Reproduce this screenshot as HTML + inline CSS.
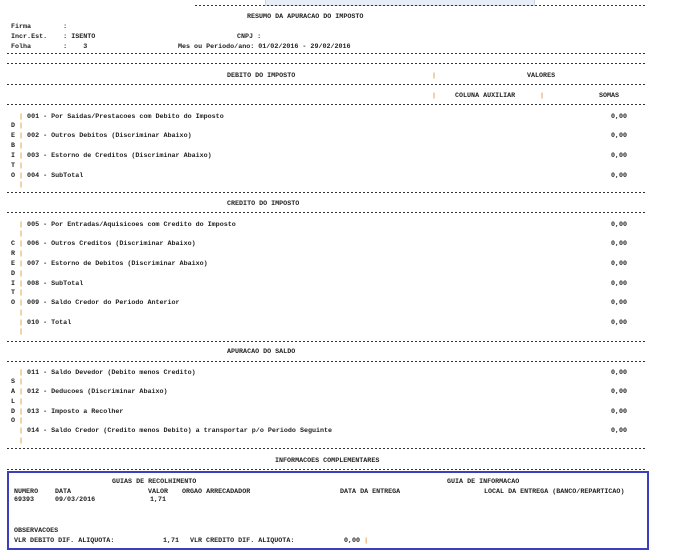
<!DOCTYPE html>
<html><head><meta charset="utf-8"><style>
html,body{margin:0;padding:0;background:#fff;width:681px;height:555px;overflow:hidden;position:relative}
div{position:absolute;white-space:pre;font-family:"Liberation Mono",monospace;font-size:6.7px;line-height:7px;color:#222;font-weight:bold;margin-top:2px}
.l{left:7px;width:638px;height:1px;background:repeating-linear-gradient(90deg,#333 0 2px,transparent 2px 4px);margin-top:0}
.x{margin-top:0}
.b{color:#e09a3a}
.v{left:611px}
</style></head><body>
<div class="x" style="left:265px;top:0;width:268px;height:5px;background:#e8eef7;border:1px solid #c8d4e6;border-top:0"></div>
<div class="l" style="top:5px;left:195px;width:450px"></div>
<div style="left:247px;top:12px">RESUMO DA APURACAO DO IMPOSTO</div>
<div style="left:11px;top:22px">Firma        :</div>
<div style="left:11px;top:32px">Incr.Est.    : ISENTO</div>
<div style="left:237px;top:32px">CNPJ :</div>
<div style="left:11px;top:42px">Folha        :    3</div>
<div style="left:178px;top:42px">Mes ou Periodo/ano: 01/02/2016 - 29/02/2016</div>
<div class="l" style="top:53px"></div>
<div class="l" style="top:63px"></div>
<div style="left:227px;top:71px">DEBITO DO IMPOSTO</div>
<div class="b" style="left:432px;top:71px">|</div>
<div style="left:527px;top:71px">VALORES</div>
<div class="l" style="top:84px"></div>
<div class="b" style="left:432px;top:91px">|</div>
<div style="left:455px;top:91px">COLUNA AUXILIAR</div>
<div class="b" style="left:540px;top:91px">|</div>
<div style="left:599px;top:91px">SOMAS</div>
<div class="l" style="top:104px"></div>

<div style="left:11px;top:112px">  <span class="b">|</span> 001 - Por Saidas/Prestacoes com Debito do Imposto</div><div class="v" style="top:112px">0,00</div>
<div style="left:11px;top:121px">D <span class="b">|</span></div>
<div style="left:11px;top:131px">E <span class="b">|</span> 002 - Outros Debitos (Discriminar Abaixo)</div><div class="v" style="top:131px">0,00</div>
<div style="left:11px;top:141px">B <span class="b">|</span></div>
<div style="left:11px;top:151px">I <span class="b">|</span> 003 - Estorno de Creditos (Discriminar Abaixo)</div><div class="v" style="top:151px">0,00</div>
<div style="left:11px;top:161px">T <span class="b">|</span></div>
<div style="left:11px;top:171px">O <span class="b">|</span> 004 - SubTotal</div><div class="v" style="top:171px">0,00</div>
<div style="left:11px;top:180px">  <span class="b">|</span></div>
<div class="l" style="top:192px"></div>
<div style="left:227px;top:199px">CREDITO DO IMPOSTO</div>
<div class="l" style="top:212px"></div>
<div style="left:11px;top:220px">  <span class="b">|</span> 005 - Por Entradas/Aquisicoes com Credito do Imposto</div><div class="v" style="top:220px">0,00</div>
<div style="left:11px;top:229px">  <span class="b">|</span></div>
<div style="left:11px;top:239px">C <span class="b">|</span> 006 - Outros Creditos (Discriminar Abaixo)</div><div class="v" style="top:239px">0,00</div>
<div style="left:11px;top:249px">R <span class="b">|</span></div>
<div style="left:11px;top:259px">E <span class="b">|</span> 007 - Estorno de Debitos (Discriminar Abaixo)</div><div class="v" style="top:259px">0,00</div>
<div style="left:11px;top:269px">D <span class="b">|</span></div>
<div style="left:11px;top:279px">I <span class="b">|</span> 008 - SubTotal</div><div class="v" style="top:279px">0,00</div>
<div style="left:11px;top:288px">T <span class="b">|</span></div>
<div style="left:11px;top:298px">O <span class="b">|</span> 009 - Saldo Credor do Periodo Anterior</div><div class="v" style="top:298px">0,00</div>
<div style="left:11px;top:308px">  <span class="b">|</span></div>
<div style="left:11px;top:318px">  <span class="b">|</span> 010 - Total</div><div class="v" style="top:318px">0,00</div>
<div style="left:11px;top:327px">  <span class="b">|</span></div>
<div class="l" style="top:341px"></div>
<div style="left:227px;top:347px">APURACAO DO SALDO</div>
<div class="l" style="top:361px"></div>
<div style="left:11px;top:368px">  <span class="b">|</span> 011 - Saldo Devedor (Debito menos Credito)</div><div class="v" style="top:368px">0,00</div>
<div style="left:11px;top:377px">S <span class="b">|</span></div>
<div style="left:11px;top:387px">A <span class="b">|</span> 012 - Deducoes (Discriminar Abaixo)</div><div class="v" style="top:387px">0,00</div>
<div style="left:11px;top:397px">L <span class="b">|</span></div>
<div style="left:11px;top:407px">D <span class="b">|</span> 013 - Imposto a Recolher</div><div class="v" style="top:407px">0,00</div>
<div style="left:11px;top:416px">O <span class="b">|</span></div>
<div style="left:11px;top:426px">  <span class="b">|</span> 014 - Saldo Credor (Credito menos Debito) a transportar p/o Periodo Seguinte</div><div class="v" style="top:426px">0,00</div>
<div style="left:11px;top:436px">  <span class="b">|</span></div>
<div class="l" style="top:448px"></div>
<div style="left:275px;top:456px">INFORMACOES COMPLEMENTARES</div>
<div class="l" style="top:469px"></div>
<div class="x" style="left:7px;top:471px;width:638px;height:75px;border:2px solid #3a3fc0"></div>
<div style="left:112px;top:477px">GUIAS DE RECOLHIMENTO</div>
<div style="left:447px;top:477px">GUIA DE INFORMACAO</div>
<div style="left:14px;top:487px">NUMERO</div><div style="left:55px;top:487px">DATA</div><div style="left:148px;top:487px">VALOR</div><div style="left:182px;top:487px">ORGAO ARRECADADOR</div><div style="left:340px;top:487px">DATA DA ENTREGA</div><div style="left:484px;top:487px">LOCAL DA ENTREGA (BANCO/REPARTICAO)</div>
<div style="left:14px;top:495px">69393</div><div style="left:55px;top:495px">09/03/2016</div><div style="left:150px;top:495px">1,71</div>
<div style="left:14px;top:526px">OBSERVACOES</div>
<div style="left:14px;top:536px">VLR DEBITO DIF. ALIQUOTA:</div><div style="left:163px;top:536px">1,71</div><div style="left:190px;top:536px">VLR CREDITO DIF. ALIQUOTA:</div><div style="left:344px;top:536px">0,00 <span class="b">|</span></div>
</body></html>
